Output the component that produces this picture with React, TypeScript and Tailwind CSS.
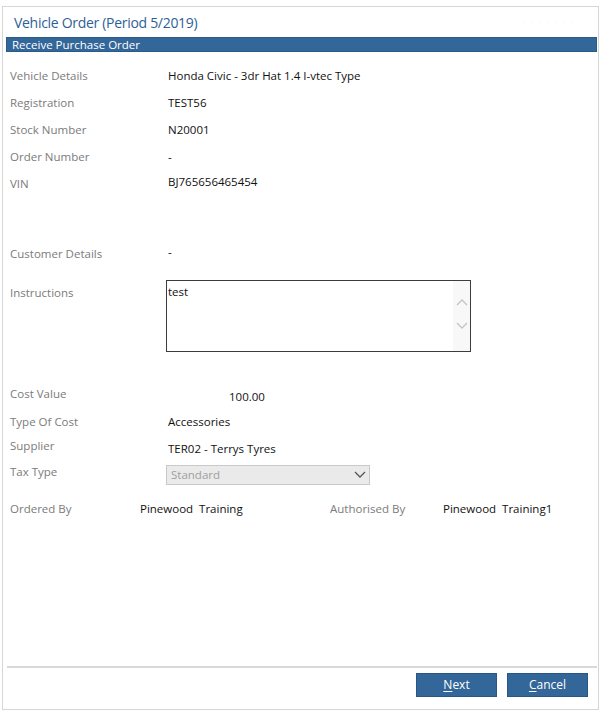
import React from "react";

const font = { fontFamily: '"Open Sans", "Noto Sans", sans-serif' };

function Label({ children }: { children: React.ReactNode }) {
  return <div className="w-[158px] shrink-0 text-[11.5px] leading-[16px] text-[#7b7b7b]">{children}</div>;
}

function Value({ children, className = "" }: { children: React.ReactNode; className?: string }) {
  return <div className={"text-[11.5px] leading-[16px] text-[#111] whitespace-nowrap " + className}>{children}</div>;
}

function Chevron({ dir, className = "" }: { dir: "up" | "down"; className?: string }) {
  return (
    <svg width="12" height="8" viewBox="0 0 12 8" className={className}>
      <path
        d={dir === "up" ? "M1 7 L6 2 L11 7" : "M1 1 L6 6 L11 1"}
        fill="none"
        stroke="currentColor"
        strokeWidth="1.3"
      />
    </svg>
  );
}

export default function App() {
  return (
    <div className="w-[602px] h-[712px] bg-white" style={font}>
      <div className="ml-[2px] mt-[6px] w-[597px] h-[704px] border border-[#d6d6d6] flex flex-col">
        <div className="h-[30px] flex items-center justify-between pl-[11px] pr-[22px]">
          <div className="text-[14px] text-[#2d5f97] tracking-[-0.3px]">Vehicle Order (Period 5/2019)</div>
          <div className="text-[8px] text-[#e3e8ef] tracking-[2px]">· · · · · · ·</div>
        </div>
        <div className="ml-[3px] mr-[1px] h-[15px] bg-[#336699] border border-[#2b5a88] flex items-center pl-[5px] text-[11.5px] text-white leading-none">
          Receive Purchase Order
        </div>

        <div className="flex-1 pl-[7px] pt-[10px]">
          <div className="h-[27px] flex items-center">
            <Label>Vehicle Details</Label>
            <Value>Honda Civic - 3dr Hat 1.4 I-vtec Type</Value>
          </div>
          <div className="h-[27px] flex items-center">
            <Label>Registration</Label>
            <Value>TEST56</Value>
          </div>
          <div className="h-[27px] flex items-center">
            <Label>Stock Number</Label>
            <Value>N20001</Value>
          </div>
          <div className="h-[27px] flex items-center">
            <Label>Order Number</Label>
            <Value>-</Value>
          </div>
          <div className="h-[27px] flex items-center">
            <Label>VIN</Label>
            <Value className="-mt-[3px]">BJ765656465454</Value>
          </div>

          <div className="h-[27px] mt-[43px] flex items-center">
            <Label>Customer Details</Label>
            <Value className="-mt-[3px]">-</Value>
          </div>

          <div className="mt-[13px] flex items-start">
            <div className="pt-[5px]">
              <Label>Instructions</Label>
            </div>
            <div className="-ml-[2px] w-[305px] h-[72px] border border-[#3c3c3c] flex">
              <div className="flex-1 text-[11.5px] leading-[16px] text-[#111] pl-[1px] pt-[3px]">test</div>
              <div className="w-[17px] bg-[#f8f8f8] flex flex-col items-center text-[#c4c4c4] pt-[17px] gap-[16px]">
                <Chevron dir="up" />
                <Chevron dir="down" />
              </div>
            </div>
          </div>

          <div className="mt-[34px] h-[28px] flex items-start">
            <Label>Cost Value</Label>
            <Value className="ml-[61px] mt-[3px]">100.00</Value>
          </div>
          <div className="h-[24px] flex items-start">
            <Label>Type Of Cost</Label>
            <Value>Accessories</Value>
          </div>
          <div className="h-[26px] flex items-start">
            <Label>Supplier</Label>
            <Value className="mt-[3px]">TER02 - Terrys Tyres</Value>
          </div>
          <div className="h-[37px] flex items-start">
            <Label>Tax Type</Label>
            <div className="-ml-[2px] mt-[1px] w-[204px] h-[20px] bg-[#eaeaea] border border-[#c9c9c9] flex items-center justify-between pl-[4px] pr-[3px]">
              <span className="text-[11.5px] text-[#a0a0a0] leading-none">Standard</span>
              <Chevron dir="down" className="text-[#555]" />
            </div>
          </div>
          <div className="flex items-center">
            <div className="w-[130px] text-[11.5px] leading-[16px] text-[#7b7b7b]">Ordered By</div>
            <div className="w-[190px] text-[11.5px] leading-[16px] text-[#111] whitespace-pre">Pinewood  Training</div>
            <div className="w-[113px] text-[11.5px] leading-[16px] text-[#7b7b7b]">Authorised By</div>
            <div className="text-[11.5px] leading-[16px] text-[#111] whitespace-pre">Pinewood  Training1</div>
          </div>
        </div>

        <div className="ml-[4px] mr-[1px] h-[2px] bg-[#d9d9d9]" />
        <div className="h-[41px] flex justify-end items-start pt-[5px] pr-[10px] gap-[10px]">
          <button className="w-[81px] h-[24px] bg-[#336699] border border-[#2a5684] text-white text-[12px] leading-none">
            <span className="underline underline-offset-2">N</span>ext
          </button>
          <button className="w-[81px] h-[24px] bg-[#336699] border border-[#2a5684] text-white text-[12px] leading-none">
            <span className="underline underline-offset-2">C</span>ancel
          </button>
        </div>
      </div>
    </div>
  );
}
